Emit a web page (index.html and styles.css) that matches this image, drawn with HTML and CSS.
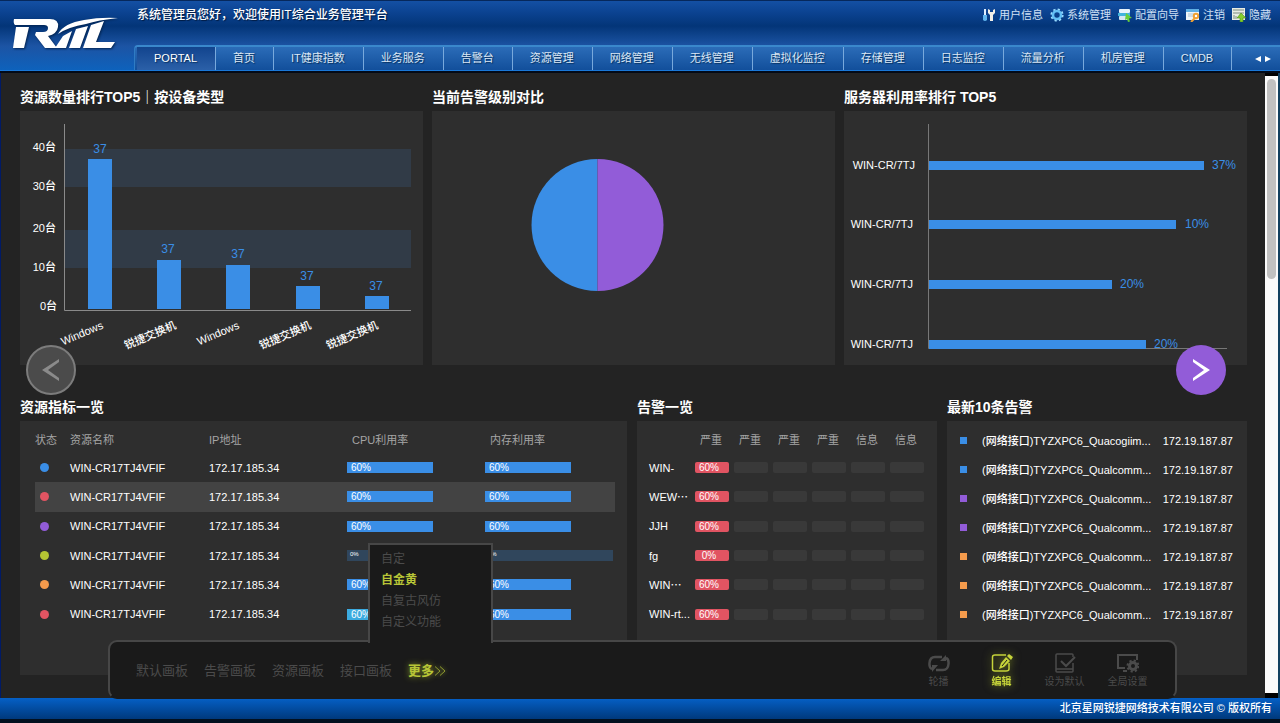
FILE: index.html
```html
<!DOCTYPE html>
<html lang="zh-CN">
<head>
<meta charset="utf-8">
<title>IT综合业务管理平台</title>
<link rel="stylesheet" href="styles.css">
</head>
<body>
<header class="header">
  <a class="logo" href="#" aria-label="RIIL">
    <svg width="108" height="36" viewBox="0 0 108 36" aria-hidden="true">
      <g class="logo-mark">
        <path d="M2 4H38Q47 4 46 12Q45 19 36 21L45 33H33L23 20L24 17H31Q36 17 36 13Q36 10 32 10H3Q1 8 2 4Z"/>
        <path d="M4 12H17L12 33H1Z"/>
        <path d="M46 19Q52 8 72 5Q88 2 106 3Q86 5 74 9Q56 12 46 19Z"/>
        <path d="M51 21L60 16L54 33H43ZM64 14L76 11L68 33H57ZM79 10L92 6L84 27H103L99 33H71Z"/>
      </g>
    </svg>
  </a>
  <div class="header-body">
    <div class="header-top">
      <p class="greeting">系统管理员您好，欢迎使用IT综合业务管理平台</p>
      <nav class="tools">
        <a href="#"><svg width="14" height="14" viewBox="0 0 14 14"><path d="M2 1h2v6H2z" fill="#dfeeff"/><path d="M1 7h4v5q-2 2-4 0z" fill="#5fb4ee"/><path d="M6 1v4l2 2v6h3V7l2-2V1l-2 1v2H8V2z" fill="#f2efe8"/></svg>用户信息</a>
        <a href="#"><svg width="14" height="14" viewBox="0 0 14 14"><circle cx="7" cy="7" r="5.6" fill="none" stroke="#9bdcff" stroke-width="2" stroke-dasharray="2.2 2.2"/><circle cx="7" cy="7" r="4" fill="none" stroke="#63bff5" stroke-width="2.6"/></svg>系统管理</a>
        <a href="#"><svg width="14" height="14" viewBox="0 0 14 14"><rect x="1" y="1" width="11" height="4" rx="1" fill="#e8f3fb"/><rect x="0" y="5" width="12" height="3" fill="#42b4dc"/><rect x="1" y="8" width="10" height="4" rx="1" fill="#d5e6f2"/><path d="M8 5l6 5-3 .5 1 3-2 .5-1-3-2 1z" fill="#67cf37"/></svg>配置向导</a>
        <a href="#"><svg width="14" height="14" viewBox="0 0 14 14"><rect x="0" y="1" width="13" height="11" fill="#eef4f8"/><rect x="0" y="1" width="13" height="3" fill="#5eaee3"/><path d="M2 6h6M2 8h5" stroke="#aac2d2"/><circle cx="10" cy="8" r="2.2" fill="#fff" stroke="#f0a030" stroke-width="2"/><path d="M9 10l-4 4" stroke="#f0a030" stroke-width="2"/></svg>注销</a>
        <a href="#"><svg width="14" height="14" viewBox="0 0 14 14"><rect x="0" y="0" width="13" height="12" fill="#e8ece4"/><path d="M1 2h11M1 5h11M2 7v4M4 8v3" stroke="#7b8b80"/><path d="M9 5l5 5h-3v4H8v-4H5z" fill="#84cf2e" stroke="#4c8c18" stroke-width=".6"/></svg>隐藏</a>
      </nav>
    </div>
    <nav class="tabs">
      <a class="active" href="#">PORTAL</a>
      <a href="#">首页</a>
      <a href="#">IT健康指数</a>
      <a href="#">业务服务</a>
      <a href="#">告警台</a>
      <a href="#">资源管理</a>
      <a href="#">网络管理</a>
      <a href="#">无线管理</a>
      <a href="#">虚拟化监控</a>
      <a href="#">存储管理</a>
      <a href="#">日志监控</a>
      <a href="#">流量分析</a>
      <a href="#">机房管理</a>
      <a href="#">CMDB</a>
      <span class="tab-scroll">
        <button type="button" aria-label="向左"><svg width="6" height="8" viewBox="0 0 6 8"><path d="M6 1v6L0 4z"/></svg></button>
        <button type="button" aria-label="向右"><svg width="6" height="8" viewBox="0 0 6 8"><path d="M0 1v6l6-3z"/></svg></button>
      </span>
    </nav>
  </div>
</header>

<div class="stage">
  <main class="content">
    <div class="row row-charts">
      <section>
        <h2>资源数量排行TOP5｜按设备类型</h2>
        <div class="panel">
          <svg class="chart" viewBox="0 0 403 254">
            <path d="M45 38h346v38H45zM45 119h346v38H45z" fill="#313b47"/>
            <path d="M44.500 13v186.500H391" fill="none" stroke="#8a8a8a"/>
            <path class="bar" d="M68 48h24v150H68zM137 149h24v49h-24zM206 154h24v44h-24zM276 175h24v23h-24zM345 185h24v13h-24z"/>
            <g class="axis-text" text-anchor="end">
              <text x="36" y="40">40台</text><text x="36" y="79">30台</text><text x="36" y="121">20台</text><text x="36" y="160">10台</text><text x="37" y="199">0台</text>
              <text transform="translate(84 217) rotate(-23)">Windows</text>
              <text transform="translate(157 217) rotate(-23)">锐捷交换机</text>
              <text transform="translate(220 217) rotate(-23)">Windows</text>
              <text transform="translate(292 217) rotate(-23)">锐捷交换机</text>
              <text transform="translate(359 217) rotate(-23)">锐捷交换机</text>
            </g>
            <g class="value-text" text-anchor="middle">
              <text x="80" y="42">37</text><text x="148" y="142">37</text><text x="218" y="147">37</text><text x="287" y="169">37</text><text x="356" y="179">37</text>
            </g>
          </svg>
        </div>
      </section>
      <section>
        <h2>当前告警级别对比</h2>
        <div class="panel">
          <svg class="chart" viewBox="0 0 403 254">
            <path d="M165.500 48a66 66 0 0 0 0 132z" fill="#3a8ee6"/>
            <path d="M165.500 48a66 66 0 0 1 0 132z" fill="#925cd8"/>
          </svg>
        </div>
      </section>
      <section>
        <h2>服务器利用率排行 TOP5</h2>
        <div class="panel">
          <svg class="chart" viewBox="0 0 403 254">
            <path d="M84.500 13v224.500H383" fill="none" stroke="#777"/>
            <path class="bar" d="M85 50h275v9H85zM85 109h247v9H85zM85 169h183v9H85zM85 229h217v9H85z"/>
            <g class="axis-text" text-anchor="end">
              <text x="71" y="58">WIN-CR/7TJ</text><text x="69" y="117">WIN-CR/7TJ</text><text x="69" y="177">WIN-CR/7TJ</text><text x="69" y="237">WIN-CR/7TJ</text>
            </g>
            <g class="value-text">
              <text x="368" y="58">37%</text><text x="341" y="117">10%</text><text x="276" y="177">20%</text><text x="310" y="237">20%</text>
            </g>
          </svg>
        </div>
      </section>
    </div>

    <div class="row row-tables">
      <section>
        <h2>资源指标一览</h2>
        <div class="panel">
          <table class="resources">
            <colgroup><col class="c-state"><col class="c-name"><col class="c-ip"><col class="c-cpu"><col></colgroup>
            <thead><tr><th>状态</th><th>资源名称</th><th>IP地址</th><th class="in">CPU利用率</th><th class="in">内存利用率</th></tr></thead>
            <tbody>
              <tr><td><i class="dot blue"></i></td><td>WIN-CR17TJ4VFIF</td><td>172.17.185.34</td><td><div class="meter"><span style="width:67%">60%</span></div></td><td><div class="meter"><span style="width:67%">60%</span></div></td></tr>
              <tr class="selected"><td><i class="dot red"></i></td><td>WIN-CR17TJ4VFIF</td><td>172.17.185.34</td><td><div class="meter"><span style="width:67%">60%</span></div></td><td><div class="meter"><span style="width:67%">60%</span></div></td></tr>
              <tr><td><i class="dot purple"></i></td><td>WIN-CR17TJ4VFIF</td><td>172.17.185.34</td><td><div class="meter"><span style="width:67%">60%</span></div></td><td><div class="meter"><span style="width:67%">60%</span></div></td></tr>
              <tr><td><i class="dot lime"></i></td><td>WIN-CR17TJ4VFIF</td><td>172.17.185.34</td><td><div class="meter empty"><span>0%</span></div></td><td><div class="meter empty"><span>0%</span></div></td></tr>
              <tr><td><i class="dot orange"></i></td><td>WIN-CR17TJ4VFIF</td><td>172.17.185.34</td><td><div class="meter"><span style="width:67%">60%</span></div></td><td><div class="meter"><span style="width:67%">60%</span></div></td></tr>
              <tr><td><i class="dot red"></i></td><td>WIN-CR17TJ4VFIF</td><td>172.17.185.34</td><td><div class="meter cyan"><span style="width:67%">60%</span></div></td><td><div class="meter"><span style="width:67%">60%</span></div></td></tr>
            </tbody>
          </table>
        </div>
      </section>
      <section>
        <h2>告警一览</h2>
        <div class="panel">
          <table class="alarms">
            <colgroup><col class="c-host"><col><col><col><col><col><col></colgroup>
            <thead><tr><td></td><th>严重</th><th>严重</th><th>严重</th><th>严重</th><th>信息</th><th>信息</th></tr></thead>
            <tbody>
              <tr><td>WIN-</td><td><b class="chip hot">60%</b></td><td><b class="chip"></b></td><td><b class="chip"></b></td><td><b class="chip"></b></td><td><b class="chip"></b></td><td><b class="chip"></b></td></tr>
              <tr><td>WEW⋯</td><td><b class="chip hot">60%</b></td><td><b class="chip"></b></td><td><b class="chip"></b></td><td><b class="chip"></b></td><td><b class="chip"></b></td><td><b class="chip"></b></td></tr>
              <tr><td>JJH</td><td><b class="chip hot">60%</b></td><td><b class="chip"></b></td><td><b class="chip"></b></td><td><b class="chip"></b></td><td><b class="chip"></b></td><td><b class="chip"></b></td></tr>
              <tr><td>fg</td><td><b class="chip hot">0%</b></td><td><b class="chip"></b></td><td><b class="chip"></b></td><td><b class="chip"></b></td><td><b class="chip"></b></td><td><b class="chip"></b></td></tr>
              <tr><td>WIN⋯</td><td><b class="chip hot">60%</b></td><td><b class="chip"></b></td><td><b class="chip"></b></td><td><b class="chip"></b></td><td><b class="chip"></b></td><td><b class="chip"></b></td></tr>
              <tr><td>WIN-rt...</td><td><b class="chip hot">60%</b></td><td><b class="chip"></b></td><td><b class="chip"></b></td><td><b class="chip"></b></td><td><b class="chip"></b></td><td><b class="chip"></b></td></tr>
            </tbody>
          </table>
        </div>
      </section>
      <section>
        <h2>最新10条告警</h2>
        <div class="panel">
          <ul class="latest">
            <li><i class="sq blue"></i><span>(网络接口)TYZXPC6_Quacogiim...</span><span>172.19.187.87</span></li>
            <li><i class="sq blue"></i><span>(网络接口)TYZXPC6_Qualcomm...</span><span>172.19.187.87</span></li>
            <li><i class="sq purple"></i><span>(网络接口)TYZXPC6_Qualcomm...</span><span>172.19.187.87</span></li>
            <li><i class="sq purple"></i><span>(网络接口)TYZXPC6_Qualcomm...</span><span>172.19.187.87</span></li>
            <li><i class="sq orange"></i><span>(网络接口)TYZXPC6_Qualcomm...</span><span>172.19.187.87</span></li>
            <li><i class="sq orange"></i><span>(网络接口)TYZXPC6_Qualcomm...</span><span>172.19.187.87</span></li>
            <li><i class="sq orange"></i><span>(网络接口)TYZXPC6_Qualcomm...</span><span>172.19.187.87</span></li>
          </ul>
        </div>
      </section>
    </div>

    <button class="pager prev" type="button" aria-label="上一页"><svg width="18" height="22" viewBox="0 0 18 22"><path d="M17 0L0 11L17 22V19L6 11L17 3Z"/></svg></button>
    <button class="pager next" type="button" aria-label="下一页"><svg width="18" height="22" viewBox="0 0 18 22"><path d="M1 0L18 11L1 22V19L12 11L1 3Z"/></svg></button>
  </main>
  <div class="scrollbar"><div class="thumb"></div></div>

  <div class="dock">
    <nav class="boards">
      <button type="button">默认画板</button>
      <button type="button">告警画板</button>
      <button type="button">资源画板</button>
      <button type="button">接口画板</button>
      <button type="button" class="more">更多<svg width="12" height="10" viewBox="0 0 12 10"><path d="M1 0.500L6 5L1 9.500M6 0.500L11 5L6 9.500"/></svg></button>
    </nav>
    <div class="actions">
      <button type="button"><svg width="22" height="20" viewBox="0 0 22 20"><path d="M4 16Q1 15 1.500 10Q2 4 7 4H14M18 5Q21 6 20.500 11Q20 17 15 17H8" fill="none" stroke="currentColor" stroke-width="2.500"/><path d="M12 8L18 2V8ZM10 12L4 19V12Z" fill="currentColor"/></svg>轮播</button>
      <button type="button" class="on"><svg width="22" height="20" viewBox="0 0 22 20"><path d="M15 2H4Q1.500 2 1.500 4V16Q1.500 18 4 18H15Q18 18 18 16V10" fill="none" stroke="currentColor" stroke-width="1.500"/><path d="M18 1L22 4L20 7L16 3ZM15 4L19 8L13 14L8 16L10 10Z" fill="currentColor"/><path d="M11 13L16 7" stroke="#1b1b1b"/></svg>编辑</button>
      <button type="button"><svg width="22" height="20" viewBox="0 0 22 20"><path d="M19 4V2Q19 1 18 1H3Q2 1 2 2V18Q2 19 3 19H18Q19 19 19 18V10M2 16H19" fill="none" stroke="currentColor" stroke-width="1.500"/><path d="M7 8L12 13L21 4" fill="none" stroke="currentColor" stroke-width="2"/></svg>设为默认</button>
      <button type="button"><svg width="22" height="20" viewBox="0 0 22 20"><path d="M20 7V2H1V15H8M6 18H10" fill="none" stroke="currentColor" stroke-width="2"/><circle cx="16" cy="13" r="3.500" fill="none" stroke="currentColor" stroke-width="3"/><circle cx="16" cy="13" r="5.500" fill="none" stroke="currentColor" stroke-width="2" stroke-dasharray="2.200 2.120"/></svg>全局设置</button>
    </div>
    <div class="popup">
      <button type="button">自定</button>
      <button type="button" class="on">自金黄</button>
      <button type="button">自复古风仿</button>
      <button type="button">自定义功能</button>
    </div>
  </div>
</div>
<footer class="footer">北京星网锐捷网络技术有限公司 © 版权所有</footer>
</body>
</html>
```
FILE: styles.css
```css
* { box-sizing: border-box; }

body {
  margin: 0;
  min-height: 100vh;
  display: flex;
  flex-direction: column;
  background: #020a18;
  color: #fff;
  font: 11px/16px "Liberation Sans", "Noto Sans CJK SC", sans-serif;
}

h2, p, ul { margin: 0; padding: 0; }
a { color: inherit; text-decoration: none; }
svg { display: block; }
button {
  border: 0;
  padding: 0;
  background: none;
  color: inherit;
  font: inherit;
  cursor: pointer;
}

/* Header */
.header {
  display: flex;
  height: 71px;
  border-top: 1px solid #06285c;
  border-bottom: 1px solid #1a78d8;
  background: linear-gradient(#1450a4, #0b4290 12px, #033578 25px, #1c54a4 45px, #0e62bc);
}
.logo { flex: none; width: 134px; padding: 14px 0 0 12px; }
.logo-mark { fill: #fff; filter: drop-shadow(1px 1px 1px #02234f); }
.header-body { flex: 1; display: flex; flex-direction: column; min-width: 0; }
.header-top {
  flex: 1;
  display: flex;
  justify-content: space-between;
  align-items: flex-start;
  padding: 6px 9px 0 3px;
}
.greeting { font-size: 12px; font-weight: 500; text-shadow: 1px 1px 1px #001a40; }
.tools { display: flex; gap: 7px; color: #cfe0f5; }
.tools a { display: flex; align-items: center; gap: 3px; white-space: nowrap; }
.tabs {
  display: flex;
  height: 25px;
  padding-left: 2px;
  border-top: 2px solid #3a88cc;
  border-left: 1px solid #2f7cc4;
  border-top-left-radius: 4px;
  background: linear-gradient(#2b6cb8, #124f9b);
  color: #dce8f6;
  line-height: 22px;
  white-space: nowrap;
}
.tabs a { padding: 0 18px 0 17px; border-right: 1px solid #78a9dc; text-shadow: 1px 1px 1px #06305f; }
.tabs .active { background: linear-gradient(#12448e, #2b60a8); color: #fff; }
.tab-scroll { display: flex; gap: 4px; margin-left: auto; padding-right: 9px; fill: #fff; }

/* Stage */
.stage {
  position: relative;
  flex: 1;
  display: flex;
  margin-top: 2px;
  border-left: 1px solid #001a66;
  border-right: 2px solid #12405f;
  background: #000;
}
.content { flex: 1; min-width: 0; padding: 14px 18px 23px 19px; background: #232323; }
.scrollbar { width: 13px; margin: 3px 0 5px; padding: 3px 2px; background: #fafafa; }
.thumb { height: 200px; border-radius: 5px; background: #c1c1c1; }

.row { display: grid; }
.row-charts { grid-template-columns: repeat(3, 1fr); gap: 9px; margin-bottom: 32px; }
.row-tables { grid-template-columns: 607fr 300fr 300fr; gap: 10px; }
h2 { font-size: 14px; line-height: 20px; font-weight: 700; margin-bottom: 4px; white-space: nowrap; }
.panel { min-height: 254px; background: #2e2e2e; }
.chart { width: 100%; height: auto; }
.bar { fill: #3a8ee6; }
.axis-text { fill: #fff; font-size: 11px; font-weight: 500; }
.value-text { fill: #3a8ee6; font-size: 12px; }

/* Tables */
table { table-layout: fixed; border-collapse: collapse; height: 202px; }
th, td { padding: 0; text-align: left; white-space: nowrap; }
td { font-weight: 500; }
th { height: 26px; color: #a5a5a5; font-weight: 400; }
.row-tables .panel { padding-top: 6px; }
.resources { width: calc(100% - 27px); margin-left: 15px; }
.c-state { width: 35px; }
.c-name { width: 139px; }
.c-ip, .c-cpu { width: 138px; }
.resources .in { padding-left: 5px; }
.resources td { padding-right: 2px; }
.selected { background: #434343; }
.dot { display: block; width: 9px; height: 9px; margin-left: 5px; border-radius: 50%; }
.sq { width: 7px; height: 7px; margin-left: 1px; }
.blue { background: #3a8ee6; }
.red { background: #e15462; }
.purple { background: #925cd8; }
.lime { background: #b5c433; }
.orange { background: #f59b4c; }

.meter { max-width: 128px; height: 11px; line-height: 11px; font-size: 10px; }
.meter span { display: block; padding-left: 4px; background: #3a8ee6; }
.meter.cyan span { background: #3cabe0; }
.meter.empty { background: #30465c; font-size: 6px; line-height: 8px; }
.meter.empty span { padding-left: 3px; background: none; }

.alarms { width: 280px; margin-left: 12px; }
.alarms th { padding-left: 5px; }
.c-host { width: 46px; }
.chip { display: block; width: 34px; height: 11px; border-radius: 2px; background: #393939; font-size: 10px; font-weight: 400; line-height: 11px; }
.chip.hot { padding-right: 6px; background: #e15462; text-align: center; }

.latest { list-style: none; padding: 0 14px 0 12px; font-weight: 500; }
.row-tables .panel:has(.latest) { padding-top: 5px; }
.latest li { display: grid; grid-template-columns: 23px 1fr auto; align-items: center; height: 29px; white-space: nowrap; }

/* Page arrows float over the dashboard */
.pager {
  position: absolute;
  top: 272px;
  display: grid;
  place-items: center;
  width: 50px;
  height: 50px;
  border-radius: 50%;
}
.prev { left: 25px; border: 2px solid #7c7c7c; background: #4b4b4b; fill: #8b8b8b; }
.next { right: 52px; background: #925cd8; fill: #fff; }

/* Dock floats over the lower edge */
.dock {
  position: absolute;
  left: 107px;
  right: 101px;
  bottom: -1px;
  display: flex;
  justify-content: space-between;
  align-items: center;
  height: 59px;
  padding: 2px 16px 0 26px;
  border: 2px solid #474747;
  border-bottom-color: #1a1a1a;
  border-radius: 9px;
  background: #1a1a1a;
  color: #4b4b4b;
}
.boards { display: flex; gap: 16px; font-size: 13px; }
.more { display: flex; align-items: center; color: #b8c637; font-weight: 700; text-shadow: 0 0 6px #8a9628; }
.more svg { fill: none; stroke: #8f9b30; filter: drop-shadow(0 0 2px #8a9628); }
.actions { display: grid; grid-template-columns: repeat(4, 63px); font-size: 10px; line-height: 14px; }
.actions button { display: flex; flex-direction: column; align-items: center; gap: 2px; }
.actions .on { color: #c6d43a; font-weight: 700; filter: drop-shadow(0 0 4px #6f7a20); }
.popup {
  position: absolute;
  left: 258px;
  bottom: 54px;
  display: flex;
  flex-direction: column;
  align-items: flex-start;
  width: 125px;
  height: 100px;
  padding: 4px 11px;
  border: 2px solid #474747;
  border-bottom: 0;
  background: #1a1a1a;
  font-size: 12px;
  line-height: 21px;
}
.popup .on { color: #b8c637; font-weight: 700; }

.footer {
  height: 25px;
  padding-right: 8px;
  border-bottom: 4px solid #02101f;
  background: linear-gradient(#0560c6, #00397c);
  font-weight: 500;
  line-height: 20px;
  text-align: right;
}
```
